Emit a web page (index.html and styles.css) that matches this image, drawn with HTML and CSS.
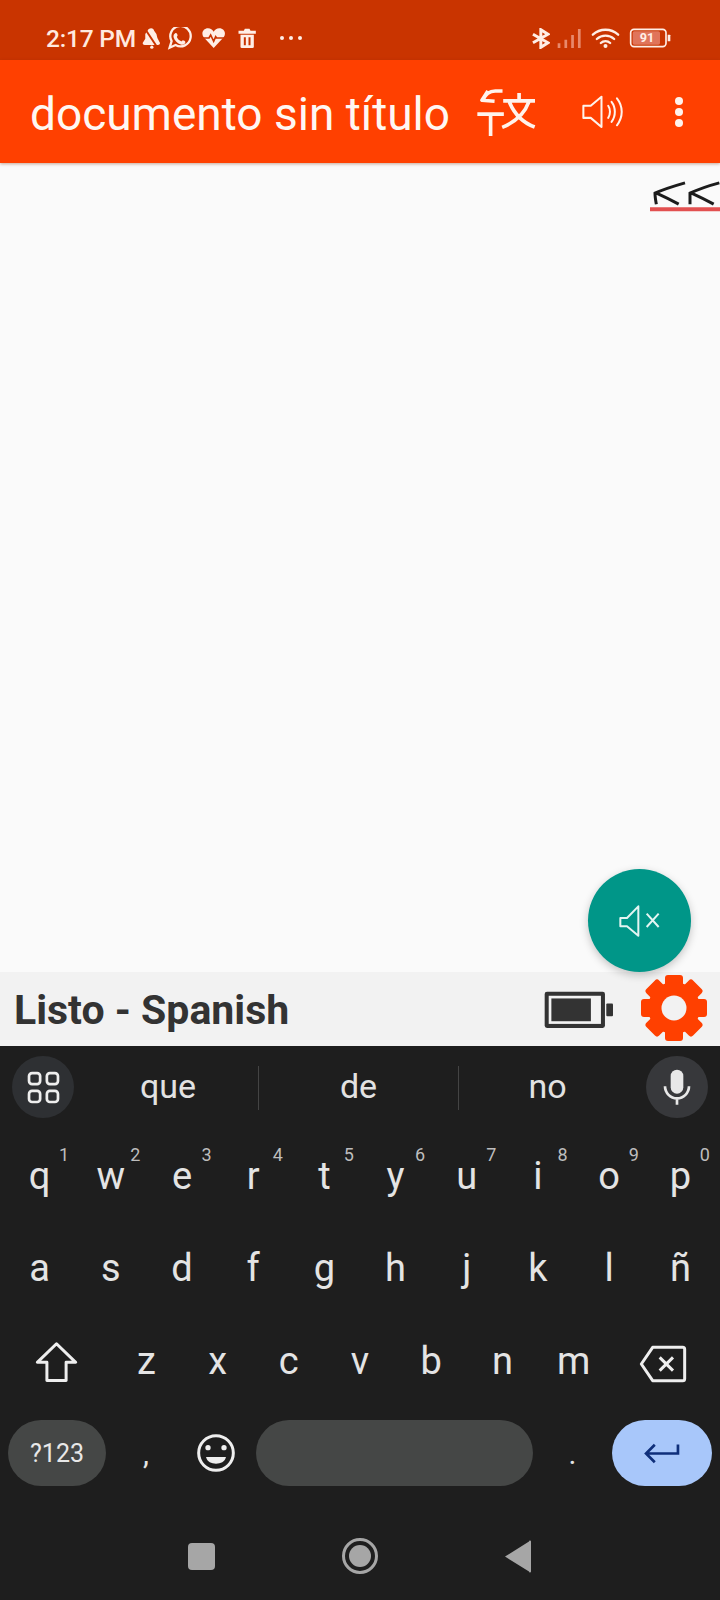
FILE: index.html
```html
<!DOCTYPE html>
<html lang="es">
<head>
<meta charset="utf-8">
<title>documento sin título</title>
<link rel="stylesheet" href="styles.css">
</head>
<body>
<div class="phone">
  <header class="statusbar">
    <span class="time">2:17 PM</span>
    <svg class="si si-bell" viewBox="425 82 58 66"><path class="w" d="M453 85c5 0 8 3 9 8l7 10 3 12 8 15c0 4-3 6-6 6H433c-3 0-6-2-6-6l8-13 0-14 7-10c1-5 6-8 11-8z"/><path class="cut" d="M436 90l36 54"/><circle class="w" cx="455" cy="143" r="5"/></svg>
    <svg class="si si-wa" viewBox="505 85 74 70"><path class="ol7" d="M512 148l6-20a31 31 0 1 1 12 12z"/><path class="w" d="M529 104c4-3 8 5 7 8-1 2-3 2-1 6 3 5 7 9 12 10 2 1 3-2 5-3 3 0 8 3 8 6-1 7-8 9-14 7-10-3-19-12-22-22-1-5 1-10 5-12z"/></svg>
    <svg class="si si-heart" viewBox="604 85 78 66"><path class="w" d="M642 148l-30-32c-9-12-1-27 13-27 8 0 13 4 17 10 4-6 9-10 17-10 14 0 22 15 13 27z"/><path class="pulse" d="M608 118h20l5-9 9 19 6-14 3 4h26"/></svg>
    <svg class="si si-trash" viewBox="712 85 62 66"><path class="w" d="M716 96h16l3-6h14l3 6h16v9h-52z"/><path class="w" d="M722 108h40v36a4 4 0 0 1-4 4h-32a4 4 0 0 1-4-4z"/><path class="slot" d="M735 116v24M749 116v24"/></svg>
    <span class="sdots"><i></i><i></i><i></i></span>
    <span class="spacer"></span>
    <svg class="si si-bt" viewBox="514 85 58 64"><path class="ol9" d="M520 104l46 26-22 14V90l22 14-46 26"/></svg>
    <svg class="si si-signal" viewBox="590 85 74 62"><path class="w dim" d="M592 130h8v14h-8zM612 120h8v24h-8zM632 106h8v38h-8zM652 88h8v56h-8z"/></svg>
    <svg class="si si-wifi" viewBox="692 85 86 66"><path class="ol7" d="M697 108a56 56 0 0 1 76 0M709 121a38 38 0 0 1 52 0M721 133a20 20 0 0 1 28 0"/><circle class="w" cx="735" cy="142" r="6"/></svg>
    <svg class="si si-batt" viewBox="806 88 126 60"><rect x="811" y="92" width="106" height="52" rx="10" class="ol5"/><rect x="817" y="98" width="82" height="40" rx="5" class="battfill"/><path class="w" d="M922 108h6a2 2 0 0 1 2 2v16a2 2 0 0 1-2 2h-6z"/><text x="860" y="131" class="batttext">91</text></svg>
  </header>

  <nav class="appbar">
    <h1 class="title">documento sin título</h1>
    <svg class="ai-translate" viewBox="345 255 190 160"><path class="tr" d="M428 270h-22c-18 0-30 10-38 28M384 270l-18 28 38 3M352 340h80M392 342v64M430 300h96M478 276v24M449 304c14 34 42 62 76 75M507 304c-12 34-36 58-80 76"/></svg>
    <svg class="ai-speaker" viewBox="655 280 140 110"><path class="sp" d="M668 318h22l32-27v90l-32-27h-22z"/><path class="sp" d="M742 318c7 10 7 26 0 36M752 306c13 17 13 43 0 60M768 296c19 24 19 56 0 80"/></svg>
    <span class="menu"><i></i><i></i><i></i></span>
  </nav>

  <main class="doc">
    <svg class="ink" viewBox="870 540 210 95"><path class="inkline" d="M975 548c-28 8-62 18-90 31 0 11 2 22 4 33M888 578c22 10 46 22 68 34M1078 548c-30 8-60 18-88 31 0 11 0 22 0 33M993 578c22 10 46 22 68 34"/><path class="inkunder" d="M870 627h210"/></svg>
    <button class="fab" type="button" aria-label="Silenciar"><svg viewBox="410 160 135 105"><path class="sp" d="M420 205h20l34-35v88l-34-28h-20z"/><path class="sp" d="M499 192l36 40M535 192l-36 40"/></svg></button>
  </main>

  <section class="strip">
    <span class="strip-text">Listo - Spanish</span>
    <svg class="battery" viewBox="190 415 215 122"><rect x="198" y="423" width="180" height="108" rx="7" class="b-out"/><rect x="210" y="435" width="156" height="84" class="b-in"/><rect x="218" y="443" width="118" height="68" fill="#333"/><rect x="382" y="458" width="20" height="38" rx="3" fill="#333"/></svg>
    <svg class="gear" viewBox="-34 -34 68 68">
      <g class="teeth"><rect x="-9" y="-33" width="18" height="66" rx="3"/><rect x="-9" y="-33" width="18" height="66" rx="3" transform="rotate(45)"/><rect x="-9" y="-33" width="18" height="66" rx="3" transform="rotate(90)"/><rect x="-9" y="-33" width="18" height="66" rx="3" transform="rotate(135)"/></g>
      <circle r="26" class="gear-body"/><circle r="12.500" class="gear-hole"/>
    </svg>
  </section>

  <section class="keyboard">
    <div class="suggest">
      <span class="round round-grid"><svg class="i-grid" viewBox="76 328 104 104"><rect x="85" y="337" width="33" height="33" rx="9"/><rect x="138" y="337" width="33" height="33" rx="9"/><rect x="85" y="390" width="33" height="33" rx="9"/><rect x="138" y="390" width="33" height="33" rx="9"/></svg></span>
      <span class="word word-first">que</span><span class="divider"></span>
      <span class="word">de</span><span class="divider"></span>
      <span class="word word-last">no</span>
      <span class="round round-mic"><svg class="i-mic" viewBox="905 75 96 120"><rect x="934" y="83" width="38" height="72" rx="19" fill="#e8e8e8"/><path class="micarc" d="M917 133a36 36 0 0 0 72 0M953 168v20"/></svg></span>
    </div>

    <div class="row ten">
      <span class="key">q<sup>1</sup></span><span class="key">w<sup>2</sup></span><span class="key">e<sup>3</sup></span><span class="key">r<sup>4</sup></span><span class="key">t<sup>5</sup></span><span class="key">y<sup>6</sup></span><span class="key">u<sup>7</sup></span><span class="key">i<sup>8</sup></span><span class="key">o<sup>9</sup></span><span class="key">p<sup>0</sup></span>
    </div>
    <div class="row ten">
      <span class="key">a</span><span class="key">s</span><span class="key">d</span><span class="key">f</span><span class="key">g</span><span class="key">h</span><span class="key">j</span><span class="key">k</span><span class="key">l</span><span class="key">ñ</span>
    </div>
    <div class="row third">
      <span class="key"><svg class="i-shift" viewBox="100 60 145 135"><path class="kout" d="M171 74l58 56h-29v55h-58v-55h-29z"/></svg></span>
      <span class="key">z</span><span class="key">x</span><span class="key">c</span><span class="key">v</span><span class="key">b</span><span class="key">n</span><span class="key">m</span>
      <span class="key"><svg class="i-back" viewBox="830 75 150 120"><path class="kout" d="M874 85h90a6 6 0 0 1 6 6v88a6 6 0 0 1-6 6h-90l-34-50z"/><path class="kout" d="M895 115l40 40M935 115l-40 40"/></svg></span>
    </div>
    <div class="row bottom">
      <span class="pill pill-sym">?123</span>
      <span class="key key-small">,</span>
      <span class="key"><svg class="i-emoji" viewBox="590 340 120 120"><circle class="kout" cx="650" cy="400" r="52"/><circle class="kfill" cx="626" cy="384" r="8"/><circle class="kfill" cx="674" cy="384" r="8"/><path class="kfill" d="M620 412h60c-4 15-16 20-30 20s-26-5-30-20z"/></svg></span>
      <span class="pill pill-space"></span>
      <span class="key key-small">.</span>
      <span class="pill pill-enter"><svg class="i-enter" viewBox="845 365 125 80"><path class="enterline" d="M955 378v27H860M886 379l-26 26 26 26"/></svg></span>
    </div>
    <div class="navbar">
      <span class="nav-square"></span>
      <span class="nav-circle"><i></i></span>
      <svg class="nav-back" viewBox="0 0 27 33"><path d="M1 16.5L25 1.500a1 1 0 0 1 2 0v30a1 1 0 0 1-2 0z"/></svg>
    </div>
  </section>
</div>
</body>
</html>
```

FILE: styles.css
```css
* { box-sizing: border-box; }
html, body { margin: 0; padding: 0; }
body { width: 720px; height: 1600px; overflow: hidden; font-family: Roboto, "Liberation Sans", sans-serif; }
.phone { width: 720px; height: 1600px; display: flex; flex-direction: column; background: #fafafa; }

/* status bar */
.statusbar { height: 60px; flex: none; background: #c93400; color: #ffe9df; display: flex; align-items: center; padding: 18px 49px 0 46px; }
.time { font-size: 24.5px; font-weight: 500; width: 96px; white-space: nowrap; position: relative; top: -1px; letter-spacing: -.2px; }
.si { display: block; flex: none; position: relative; top: -1px; }
.si .w { fill: #ffeee6; }
.si .dim { fill: #e8896b; }
.si .cut { stroke: #c93400; stroke-width: 6; fill: none; }
.si .pulse { stroke: #c93400; stroke-width: 5; fill: none; }
.si .slot { stroke: #c93400; stroke-width: 6; fill: none; }
.si .ol7 { stroke: #ffeee6; stroke-width: 7; fill: none; stroke-linecap: round; }
.si .ol9 { stroke: #ffeee6; stroke-width: 9; fill: none; }
.si .ol5 { stroke: #ffeee6; stroke-width: 5; fill: none; }
.si .battfill { fill: #e0745a; }
.si .batttext { fill: #ffeee6; font-size: 38px; font-weight: 700; text-anchor: middle; font-family: Roboto, sans-serif; }
.si-bell { width: 19px; height: 22px; }
.si-wa { width: 25px; height: 23px; margin-left: 6px; }
.si-heart { width: 26px; height: 22px; margin-left: 9px; }
.si-trash { width: 21px; height: 22px; margin-left: 10px; }
.sdots { display: flex; gap: 5px; margin-left: 22px; position: relative; top: -1px; }
.sdots i { width: 4px; height: 4px; border-radius: 50%; background: #ffeee6; }
.spacer { flex: 1; }
.si-bt { width: 19px; height: 21px; }
.si-signal { width: 25px; height: 21px; margin-left: 7px; }
.si-wifi { width: 29px; height: 22px; margin-left: 9px; }
.si-batt { width: 42px; height: 20px; margin-left: 9px; }

/* app bar */
.appbar { height: 103px; flex: none; background: #ff4000; color: #fff; display: flex; align-items: center; padding: 0 0 0 30px; box-shadow: 0 1px 3px rgba(120, 40, 0, .4); position: relative; z-index: 1; }
.title { margin: 0; font-size: 46px; font-weight: 400; width: 445px; white-space: nowrap; color: #fff7f2; position: relative; top: 2px; }
.tr, .sp { fill: none; stroke: #fff3ec; stroke-linecap: round; stroke-linejoin: round; }
.tr { stroke-width: 11; stroke-linecap: butt; }
.sp { stroke-width: 6; }
.ai-translate { width: 63px; height: 53px; flex: none; margin-top: 2px; }
.ai-speaker { width: 47px; height: 37px; flex: none; margin-left: 41px; }
.menu { display: flex; flex-direction: column; gap: 3px; margin-left: 49px; }
.menu i { width: 8px; height: 8px; border-radius: 50%; background: #fff3ec; }

/* document */
.doc { flex: 1; position: relative; display: flex; flex-direction: column; align-items: flex-end; padding-top: 17px; background: #fafafa; }
.ink { width: 70px; height: 32px; display: block; }
.inkline { fill: none; stroke: #1c1c1c; stroke-width: 9; }
.inkunder { fill: none; stroke: #e25050; stroke-width: 12; }
.fab { position: absolute; left: 588px; bottom: 0; width: 103px; height: 103px; border: 0; border-radius: 50%; padding: 0; background: #009688; box-shadow: 0 3px 8px rgba(0, 0, 0, .22); display: flex; align-items: center; justify-content: center; z-index: 2; }
.fab svg { width: 45px; height: 35px; display: block; }
.fab .sp { stroke: #e3f5f2; stroke-width: 6; stroke-linecap: butt; }

/* status strip */
.strip { height: 74px; flex: none; background: #f2f2f2; display: flex; align-items: center; padding: 0 12px 0 14px; }
.strip-text { flex: 1; font-size: 41px; font-weight: 700; color: #333; position: relative; top: 1px; }
.battery { width: 72px; height: 41px; flex: none; }
.b-out { fill: #333; }
.b-in { fill: #f2f2f2; }
.gear { width: 68px; height: 68px; flex: none; margin-left: 26px; position: relative; top: -1px; }
.teeth, .gear-body { fill: #ff4000; }
.gear-hole { fill: #f2f2f2; }

/* keyboard */
.keyboard { height: 554px; flex: none; background: #1e1e1e; color: #e8e8e8; display: flex; flex-direction: column; font-family: Roboto, "Liberation Sans", sans-serif; }
.suggest { height: 84px; flex: none; display: grid; grid-template-columns: 62px 184px 1px 199px 1px 1fr 62px; align-items: center; padding: 0 12px; position: relative; }
.round { width: 62px; height: 62px; border-radius: 50%; display: flex; align-items: center; justify-content: center; flex: none; position: relative; top: -1px; }
.round-grid { background: #2e3033; }
.round-mic { background: #37383b; }
.i-grid { width: 35px; height: 35px; fill: none; stroke: #eee; stroke-width: 8; }
.i-mic { width: 32px; height: 40px; }
.micarc { fill: none; stroke: #e8e8e8; stroke-width: 8; }
.word { text-align: center; font-size: 34px; color: #e2e2e2; position: relative; top: -2px; }
.word-first { padding-left: 4px; }
.word-last { padding-right: 10px; }
.divider { width: 1px; height: 44px; background: #444; }

.row { flex: none; display: grid; padding: 0 4px; height: 92px; align-items: center; }
.ten { grid-template-columns: repeat(10, 1fr); }
.third { grid-template-columns: 1.5fr repeat(7, 1fr) 1.5fr; height: 94px; }
.bottom { grid-template-columns: 98px 80px 60px 287px 79px 100px; padding: 0 8px; height: 90px; }
.key { position: relative; display: flex; align-items: center; justify-content: center; font-size: 38px; line-height: 1; height: 100%; color: #e4e4e4; }
.key sup { position: absolute; top: 15px; right: 6px; font-size: 18px; line-height: 20px; color: #bdbdbd; vertical-align: baseline; }
.key-small { font-size: 30px; padding-top: 1px; }
.kout { fill: none; stroke: #eee; stroke-width: 9; stroke-linejoin: round; }
.kfill { fill: #eee; }
.i-shift { width: 48px; height: 45px; }
.i-back { width: 50px; height: 40px; position: relative; top: 3px; }
.i-emoji { width: 40px; height: 40px; }
.pill { height: 66px; border-radius: 33px; display: flex; align-items: center; justify-content: center; background: #454746; font-size: 25px; color: #e8e8e8; }
.pill-space { margin-left: 10px; }
.pill-enter { background: #a8c7fa; }
.i-enter { width: 42px; height: 27px; }
.enterline { fill: none; stroke: #0f2f7a; stroke-width: 8; }

.navbar { flex: 1; display: flex; align-items: center; justify-content: space-between; padding: 14px 189px 0 188px; }
.nav-square { width: 27px; height: 27px; border-radius: 4px; background: #a6a6a6; }
.nav-circle { width: 36px; height: 36px; border-radius: 50%; border: 3px solid #a6a6a6; display: flex; align-items: center; justify-content: center; }
.nav-circle i { width: 22px; height: 22px; border-radius: 50%; background: #a6a6a6; }
.nav-back { width: 27px; height: 33px; fill: #a6a6a6; }
```
